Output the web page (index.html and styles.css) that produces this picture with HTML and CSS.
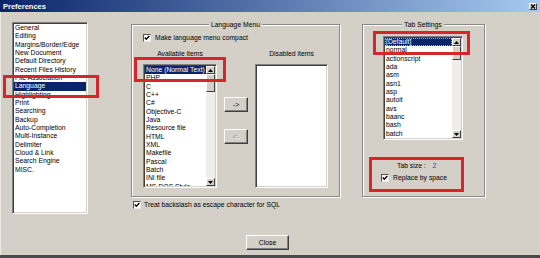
FILE: index.html
```html
<!DOCTYPE html>
<html lang="en">

<head>
    <meta charset="UTF-8">
    <meta name="viewport" content="width=device-width, initial-scale=1.0">
    <title>Preferences</title>
    <link rel="stylesheet" href="styles.css">
</head>

<body>
    <div class="window">
        <div class="titlebar">
            <span class="title">Preferences</span>
            <span class="close-box">
                <svg width="6" height="5" viewBox="0 0 6 5"><path d="M1 0.5 L5 4.5 M5 0.5 L1 4.5" stroke="#000" stroke-width="1.2"/></svg>
            </span>
        </div>

        <div class="content">
            <ul class="listbox pages">
                <li>General</li>
                <li>Editing</li>
                <li>Margins/Border/Edge</li>
                <li>New Document</li>
                <li>Default Directory</li>
                <li>Recent Files History</li>
                <li>File Association</li>
                <li class="selected">Language</li>
                <li>Highlighting</li>
                <li>Print</li>
                <li>Searching</li>
                <li>Backup</li>
                <li>Auto-Completion</li>
                <li>Multi-Instance</li>
                <li>Delimiter</li>
                <li>Cloud &amp; Link</li>
                <li>Search Engine</li>
                <li>MISC.</li>
            </ul>

            <div class="middle">
                <fieldset class="group lang-group">
                    <legend>Language Menu</legend>
                    <label class="check">
                        <span class="box"><svg width="6" height="6" viewBox="0 0 6 6"><path d="M0.8 2.6 L2.3 4.2 L5.3 1" fill="none" stroke="#000" stroke-width="1.4"/></svg></span>
                        Make language menu compact
                    </label>
                    <div class="lists">
                        <div class="col">
                            <div class="caption">Available items</div>
                            <div class="listbox scrolled avail">
                                <ul class="items">
                                    <li class="selected">None (Normal Text)</li>
                                    <li>PHP</li>
                                    <li>C</li>
                                    <li>C++</li>
                                    <li>C#</li>
                                    <li>Objective-C</li>
                                    <li>Java</li>
                                    <li>Resource file</li>
                                    <li>HTML</li>
                                    <li>XML</li>
                                    <li>Makefile</li>
                                    <li>Pascal</li>
                                    <li>Batch</li>
                                    <li>INI file</li>
                                    <li>MS-DOS Style</li>
                                </ul>
                                <div class="scrollbar">
                                    <span class="sb-btn"><svg width="5" height="3" viewBox="0 0 5 3"><path d="M0 3 L2.5 0 L5 3 Z"/></svg></span>
                                    <span class="thumb avail-thumb"></span>
                                    <span class="track"></span>
                                    <span class="sb-btn"><svg width="5" height="3" viewBox="0 0 5 3"><path d="M0 0 L2.5 3 L5 0 Z"/></svg></span>
                                </div>
                            </div>
                        </div>
                        <div class="movers">
                            <button class="btn mover">-&gt;</button>
                            <button class="btn mover" disabled>&lt;-</button>
                        </div>
                        <div class="col">
                            <div class="caption">Disabled items</div>
                            <div class="listbox disabled-list"></div>
                        </div>
                    </div>
                </fieldset>
                <label class="check sql">
                    <span class="box"><svg width="6" height="6" viewBox="0 0 6 6"><path d="M0.8 2.6 L2.3 4.2 L5.3 1" fill="none" stroke="#000" stroke-width="1.4"/></svg></span>
                    Treat backslash as escape character for SQL
                </label>
            </div>

            <fieldset class="group tab-group">
                <legend>Tab Settings</legend>
                <div class="listbox scrolled tabs">
                    <ul class="items">
                        <li class="selected focused">[Default]</li>
                        <li>normal</li>
                        <li>actionscript</li>
                        <li>ada</li>
                        <li>asm</li>
                        <li>asn1</li>
                        <li>asp</li>
                        <li>autoit</li>
                        <li>avs</li>
                        <li>baanc</li>
                        <li>bash</li>
                        <li>batch</li>
                    </ul>
                    <div class="scrollbar">
                        <span class="sb-btn"><svg width="5" height="3" viewBox="0 0 5 3"><path d="M0 3 L2.5 0 L5 3 Z"/></svg></span>
                        <span class="thumb tabs-thumb"></span>
                        <span class="track"></span>
                        <span class="sb-btn"><svg width="5" height="3" viewBox="0 0 5 3"><path d="M0 0 L2.5 3 L5 0 Z"/></svg></span>
                    </div>
                </div>
                <div class="tabsize">Tab size : <span class="num">2</span></div>
                <label class="check replace">
                    <span class="box"><svg width="6" height="6" viewBox="0 0 6 6"><path d="M0.8 2.6 L2.3 4.2 L5.3 1" fill="none" stroke="#000" stroke-width="1.4"/></svg></span>
                    Replace by space
                </label>
            </fieldset>
        </div>

        <div class="footer">
            <button class="btn close-btn">Close</button>
        </div>

        <!-- red annotation boxes -->
        <div class="mark mark-lang"></div>
        <div class="mark mark-avail"></div>
        <div class="mark mark-tab"></div>
        <div class="mark mark-size"></div>
    </div>
</body>

</html>
```

FILE: styles.css
```css
body {
    margin: 0;
    font-family: "Liberation Sans", Arial, sans-serif;
    font-size: 6.8px;
    color: #000;
}

.window {
    position: relative;
    width: 540px;
    height: 258px;
    box-sizing: border-box;
    background: #d4d0c8;
    border-bottom: 3px solid #4a4a4a;
    box-shadow: inset 1px 0 #eeece7;
    overflow: hidden;
}

.titlebar {
    height: 12px;
    display: flex;
    align-items: center;
    justify-content: space-between;
    padding: 0 3px;
    background: linear-gradient(to right, #0a246a, #a6caf0);
}

.title {
    color: #fff;
    font-weight: bold;
    font-size: 7.5px;
}

.close-box {
    width: 8px;
    height: 7px;
    box-sizing: border-box;
    display: flex;
    align-items: center;
    justify-content: center;
    background: #d4d0c8;
    border: 1px solid;
    border-color: #fff #404040 #404040 #fff;
}

.content {
    display: flex;
    align-items: flex-start;
}

/* list boxes */
.listbox {
    box-sizing: border-box;
    margin: 0;
    padding: 1px;
    list-style: none;
    background: #fff;
    border: 1px solid;
    border-color: #808080 #fff #fff #808080;
    box-shadow: inset 1px 1px #404040, inset -1px -1px #d4d0c8;
    overflow: hidden;
}

.listbox li,
.items li {
    height: 8.33px;
    line-height: 8.33px;
    padding-left: 1px;
    white-space: nowrap;
}

.items {
    flex: 1;
    min-width: 0;
    margin: 0;
    padding: 0;
    list-style: none;
    overflow: hidden;
}

.selected {
    background: #0a246a;
    color: #fff;
}

.focused {
    outline: 1px dotted #9fa8d8;
    outline-offset: -1px;
}

.pages {
    margin: 10px 0 0 12px;
    width: 76px;
    height: 192px;
}

.scrolled {
    display: flex;
}

.scrollbar {
    width: 9px;
    flex: none;
    display: flex;
    flex-direction: column;
    background: #eeede9;
}

.sb-btn,
.thumb {
    box-sizing: border-box;
    background: #d4d0c8;
    border: 1px solid;
    border-color: #fff #404040 #404040 #fff;
}

.sb-btn {
    height: 8px;
    flex: none;
    display: flex;
    align-items: center;
    justify-content: center;
}

.avail-thumb {
    height: 18px;
}

.tabs-thumb {
    height: 14px;
}

.track {
    flex: 1;
}

/* group boxes */
.group {
    box-sizing: border-box;
    margin: 0;
    min-width: 0;
    border: 1px solid #8a8883;
    box-shadow: inset 1px 1px #fff, 1px 1px #fff;
}

.group legend {
    margin: 0 auto;
    padding: 0 2px;
    line-height: 9px;
    background: #d4d0c8;
}

.middle {
    margin: 8px 0 0 43px;
    width: 209px;
}

.lang-group {
    padding: 5px 11px 8px;
}

.check {
    display: flex;
    align-items: center;
    gap: 4px;
    height: 8px;
    line-height: 8px;
}

.box {
    width: 8px;
    height: 8px;
    box-sizing: border-box;
    display: flex;
    align-items: center;
    justify-content: center;
    background: #fff;
    border: 1px solid;
    border-color: #505050 #e8e8e8 #e8e8e8 #505050;
}

.lists {
    display: flex;
    gap: 7px;
    margin-top: 8px;
}

.col {
    display: flex;
    flex-direction: column;
}

.caption {
    text-align: center;
    line-height: 8px;
    margin-bottom: 6px;
}

.avail {
    width: 74px;
    height: 124px;
}

.disabled-list {
    width: 73px;
    height: 124px;
}

.movers {
    display: flex;
    flex-direction: column;
    gap: 17px;
    padding-top: 47px;
}

.btn {
    box-sizing: border-box;
    padding: 0;
    font: inherit;
    color: #000;
    background: #d4d0c8;
    border: 1px solid;
    border-color: #fff #404040 #404040 #fff;
    box-shadow: inset -1px -1px #808080;
}

.mover {
    width: 24px;
    height: 15px;
}

.mover:disabled {
    color: #808080;
    text-shadow: 1px 1px #fff;
}

.sql {
    margin: 4px 0 0 2px;
    gap: 3px;
}

.tab-group {
    margin: 8px 0 0 22px;
    width: 123px;
    padding: 7px 21px 14px 20px;
}

.tabs {
    width: 80px;
    height: 104px;
}

.tabsize {
    margin-top: 22px;
    padding-left: 14px;
    line-height: 8px;
}

.num {
    margin-left: 5px;
    color: #3434c8;
}

.replace {
    margin: 4px 0 0 -2px;
}

.footer {
    display: flex;
    justify-content: center;
    margin-top: 21px;
    padding-right: 5px;
}

.close-btn {
    width: 43px;
    height: 15px;
}

/* annotation boxes drawn over the dialog */
.mark {
    position: absolute;
    box-sizing: border-box;
    border: 3px solid #d6262b;
}

.mark-lang {
    left: 3px;
    top: 75px;
    width: 96px;
    height: 23px;
}

.mark-avail {
    left: 134px;
    top: 57px;
    width: 92px;
    height: 25px;
}

.mark-tab {
    left: 373px;
    top: 31px;
    width: 97px;
    height: 24px;
}

.mark-size {
    left: 369px;
    top: 157px;
    width: 95px;
    height: 35px;
}
```
